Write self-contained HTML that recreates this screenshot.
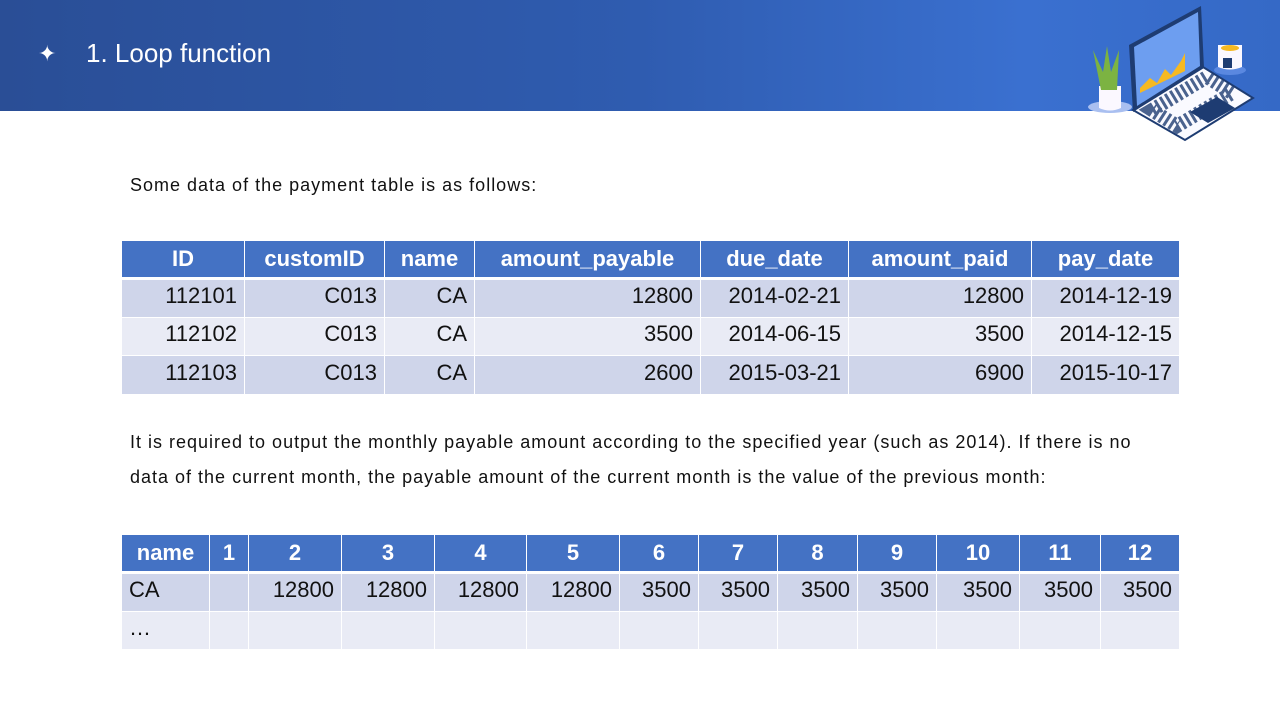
<!DOCTYPE html>
<html><head><meta charset="utf-8"><style>
*{margin:0;padding:0;box-sizing:border-box}
body{width:1280px;height:720px;background:#fff;position:relative;overflow:hidden;font-family:"Liberation Sans",sans-serif}
.hdr{position:absolute;left:0;top:0;width:1280px;height:111px;background:linear-gradient(90deg,#2a4e96 0%,#2f5cb0 50%,#3a70d0 80%,#3569c6 100%)}
.star{position:absolute;left:38px;top:41px;color:#fff;font-size:22px}
.title{position:absolute;left:86px;top:38px;color:#fff;font-size:26px;font-family:"Liberation Sans","Noto Sans CJK SC",sans-serif}
.p{position:absolute;left:130px;color:#111;font-size:18px;letter-spacing:1px;font-family:"Liberation Sans","Noto Sans CJK SC",sans-serif;line-height:35px}
table{position:absolute;left:121px;border-collapse:collapse;table-layout:fixed;font-size:22px;color:#111}
td,th{border:1px solid #fff;padding:0 7px;white-space:nowrap;overflow:hidden}
th{background:#4472c4;color:#fff;font-weight:bold;text-align:center;height:38px;border-bottom:3px solid #fff}
td{height:38.5px;text-align:right;padding-bottom:4px}
tr.a td{background:#cfd5ea}
tr.b td{background:#e9ebf5}
</style></head><body>
<div class="hdr"></div>
<div class="star">✦</div>
<div class="title">1. Loop function</div>
<svg style="position:absolute;left:1080px;top:0" width="200" height="145" viewBox="0 0 200 145">
<ellipse cx="30" cy="107" rx="22" ry="6" fill="#a9bff0"/>
<path d="M19 86 h22 v22 q-11 5 -22 0z" fill="#fbf8ff"/>
<path d="M21 90 l-8 -40 l10 22 l4 -26 l4 26 l8 -22 l-2 40z" fill="#7cb342"/>
<ellipse cx="150" cy="70" rx="16" ry="5" fill="#5a88e0"/>
<path d="M138 45 h24 v22 q-12 5 -24 0z" fill="#fbf8ff"/>
<ellipse cx="150" cy="48" rx="9" ry="3" fill="#f6b921"/>
<rect x="143" y="58" width="9" height="10" fill="#1e3c72"/>
<path d="M53 110 l70 -43 l50 31 l-68 42z" fill="#fafaff" stroke="#1e3c72" stroke-width="2"/>
<path d="M72 110 l55 -33 l25 16 l-55 33z" fill="none" stroke="#1e3c72" stroke-width="14" stroke-dasharray="3 3" opacity=".8"/>
<path d="M110 112 l27 -15 l18 11 l-27 15z" fill="#1e3c72"/>
<path d="M53 112 l-4 -67 l72 -39 l3 62z" fill="#1e3c72"/>
<path d="M57 106 l-3 -59 l64 -35 l2 54z" fill="#6d9ef0"/>
<path d="M60 88 l10 -10 l7 5 l8 -14 l6 6 l10 -14 l4 -8 v18 l-45 22z" fill="#f6b921"/>
</svg>
<div class="p" style="top:168px">Some data of the payment table is as follows:</div>
<table style="top:240px;width:1058px">
<colgroup><col style="width:123px"><col style="width:140px"><col style="width:90px"><col style="width:226px"><col style="width:148px"><col style="width:183px"><col style="width:148px"></colgroup>
<tr><th>ID</th><th>customID</th><th>name</th><th>amount_payable</th><th>due_date</th><th>amount_paid</th><th>pay_date</th></tr>
<tr class="a"><td>112101</td><td>C013</td><td>CA</td><td>12800</td><td>2014-02-21</td><td>12800</td><td>2014-12-19</td></tr>
<tr class="b"><td>112102</td><td>C013</td><td>CA</td><td>3500</td><td>2014-06-15</td><td>3500</td><td>2014-12-15</td></tr>
<tr class="a"><td>112103</td><td>C013</td><td>CA</td><td>2600</td><td>2015-03-21</td><td>6900</td><td>2015-10-17</td></tr>
</table>
<div class="p" style="top:425px">It is required to output the monthly payable amount according to the specified year (such as 2014). If there is no<br>data of the current month, the payable amount of the current month is the value of the previous month:</div>
<table style="top:534px;width:1058px">
<colgroup><col style="width:88px"><col style="width:39px"><col style="width:93px"><col style="width:93px"><col style="width:92px"><col style="width:93px"><col style="width:79px"><col style="width:79px"><col style="width:80px"><col style="width:79px"><col style="width:83px"><col style="width:81px"><col style="width:79px"></colgroup>
<tr><th>name</th><th>1</th><th>2</th><th>3</th><th>4</th><th>5</th><th>6</th><th>7</th><th>8</th><th>9</th><th>10</th><th>11</th><th>12</th></tr>
<tr class="a"><td style="text-align:left">CA</td><td></td><td>12800</td><td>12800</td><td>12800</td><td>12800</td><td>3500</td><td>3500</td><td>3500</td><td>3500</td><td>3500</td><td>3500</td><td>3500</td></tr>
<tr class="b"><td style="text-align:left">…</td><td></td><td></td><td></td><td></td><td></td><td></td><td></td><td></td><td></td><td></td><td></td><td></td></tr>
</table>
</body></html>
